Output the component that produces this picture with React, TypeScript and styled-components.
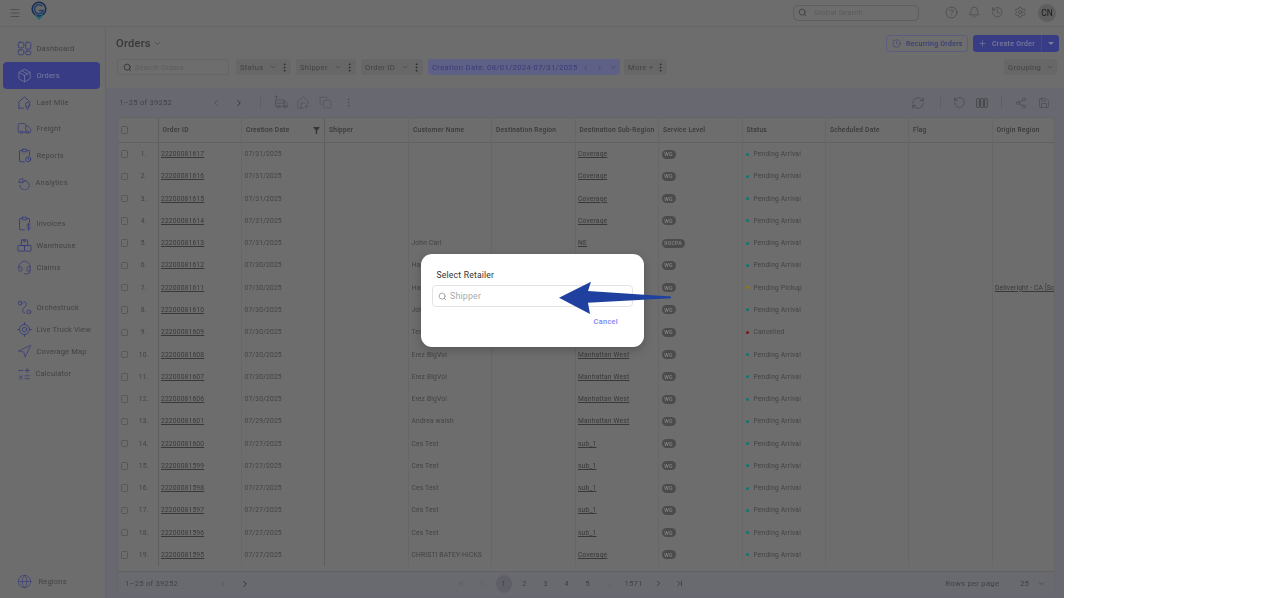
import React from "react";
import styled, { createGlobalStyle } from "styled-components";
import {
  Menu, Package, Truck, Globe, Headset, Navigation, Search, ChevronDown, ChevronLeft, ChevronRight,
  EllipsisVertical, Clock, Plus, CircleHelp, Bell, History, Settings, HousePlus, Copy,
  RefreshCw, RotateCcw, Share2, Save, ChevronFirst, ChevronLast,
} from "lucide-react";

const C = {
  base: "#808080",
  line: "#777777",
  softLine: "#797979",
  lav: "#7a7a85",
  chip: "#797979",
  text: "#434343",
  mid: "#4e4e4e",
  blue: "#42479c",
  icon: "#41468f",
  chipBlue: "#70719c",
};

const Global = createGlobalStyle`
  html, body { margin: 0; padding: 0; background: #fff; }
  body { font-family: Roboto, "Liberation Sans", sans-serif; color: ${C.text}; }
  * { box-sizing: border-box; }
`;

const Shell = styled.div`
  width: 1280px;
  height: 598px;
  background: #fff;
  overflow: hidden;
`;
const Page = styled.div`
  position: relative;
  width: 1064px;
  height: 598px;
  overflow: hidden;
`;
const Dimmed = styled.div`
  height: 100%;
  display: flex;
  flex-direction: column;
  background: ${C.base};
  filter: brightness(0.85) blur(0.35px);
`;
const TopBar = styled.header`
  height: 27px;
  flex: none;
  display: flex;
  align-items: center;
  padding: 0 8px 1px 9px;
  border-bottom: 1px solid ${C.line};
  color: ${C.mid};
`;
const LogoBox = styled.div`
  margin: -5px 0 0 10px;
  display: flex;
`;
const GlobalSearch = styled.div`
  margin-left: auto;
  width: 126px;
  height: 16px;
  border: 1px solid #6e6e6e;
  border-radius: 5px;
  display: flex;
  align-items: center;
  gap: 7px;
  padding-left: 4px;
  font-size: 7.6px;
  letter-spacing: 0.15px;
  color: #6a6a6a;
`;
const TopIcons = styled.div`
  display: flex;
  align-items: center;
  margin-left: 26px;
  gap: 10.4px;
`;
const Avatar = styled.div`
  width: 18px;
  height: 18px;
  border-radius: 50%;
  background: #6f6f6f;
  display: flex;
  align-items: center;
  justify-content: center;
  font-size: 8.4px;
  color: #222;
  margin-left: 1px;
`;
const Body = styled.div`
  flex: 1;
  min-height: 0;
  display: flex;
`;
const Sidebar = styled.nav`
  width: 106px;
  flex: none;
  border-right: 1px solid ${C.line};
  display: flex;
  flex-direction: column;
  padding: 8.2px 5px 6px 3px;
`;
const NavGroup = styled.div<{ $gap?: number }>`
  display: flex;
  flex-direction: column;
  margin-bottom: ${(p) => p.$gap ?? 0}px;
`;
const NavItem = styled.div<{ $h: number; $active?: boolean }>`
  height: ${(p) => p.$h}px;
  display: flex;
  align-items: center;
  padding-left: 14px;
  gap: 4.5px;
  font-size: 7.5px;
  letter-spacing: 0.18px;
  color: ${(p) => (p.$active ? "#8f92b8" : C.mid)};
  background: ${(p) => (p.$active ? C.blue : "transparent")};
  border-radius: 4px;
  svg { color: ${(p) => (p.$active ? "#8f92b8" : C.icon)}; flex: none; }
`;
const RegionItem = styled(NavItem)`
  margin-top: auto;
  gap: 6.5px;
`;
const Main = styled.main`
  flex: 1;
  min-width: 0;
  display: flex;
  flex-direction: column;
`;
const Header = styled.div`
  height: 61px;
  flex: none;
  padding: 8px 5px 0 10px;
  display: flex;
  flex-direction: column;
  gap: 7px;
`;
const HeadRow = styled.div`
  height: 17px;
  display: flex;
  align-items: center;
`;
const Title = styled.div`
  font-size: 11.2px;
  font-weight: 500;
  letter-spacing: 0.2px;
  color: ${C.text};
  display: flex;
  align-items: center;
  gap: 2px;
  margin-top: -1px;
`;
const Recurring = styled.div`
  margin-left: auto;
  width: 82px;
  height: 17px;
  border: 1px solid #6c6e98;
  border-radius: 3px;
  display: flex;
  align-items: center;
  gap: 5px;
  padding-left: 5px;
  color: ${C.icon};
  font-size: 6.9px;
  font-weight: 500;
  letter-spacing: 0.28px;
`;
const CreateBtn = styled.div`
  margin-left: 5px;
  width: 86px;
  height: 17px;
  background: ${C.blue};
  border-radius: 3px;
  display: flex;
  align-items: center;
  color: #8f92b8;
  font-size: 6.9px;
  font-weight: 500;
  letter-spacing: 0.32px;
`;
const CreateMain = styled.div`
  flex: 1;
  height: 100%;
  display: flex;
  align-items: center;
  gap: 5px;
  padding-left: 5px;
  border-right: 1px solid #52569c;
`;
const Caret = styled.div`
  width: 17px;
  display: flex;
  justify-content: center;
  &::before {
    content: "";
    border: 3px solid transparent;
    border-top: 3px solid #8f92b8;
    border-bottom: 0;
  }
`;
const FilterRow = styled.div`
  height: 16px;
  display: flex;
  align-items: center;
  padding: 0 2px 0 1px;
`;
const OrderSearch = styled.div`
  width: 112px;
  height: 16px;
  border: 1px solid ${C.line};
  border-radius: 3px;
  display: flex;
  align-items: center;
  gap: 3px;
  padding-left: 5px;
  font-size: 7.4px;
  letter-spacing: 0.2px;
  color: #6c6c6c;
  margin-right: 7px;
`;
const Chip = styled.div<{ $w: number; $gap: number; $on?: boolean }>`
  width: ${(p) => p.$w}px;
  height: 16px;
  margin-right: ${(p) => p.$gap}px;
  background: ${(p) => (p.$on ? C.chipBlue : C.chip)};
  border-radius: 3px;
  display: flex;
  align-items: center;
  padding: 0 1px 0 4px;
  font-size: 7.6px;
  letter-spacing: ${(p) => (p.$on ? "0.36px" : "0.3px")};
  color: ${(p) => (p.$on ? C.icon : C.mid)};
  white-space: nowrap;
`;
const ChipLabel = styled.span`
  flex: 1;
`;
const GroupChip = styled(Chip)`
  margin: 0 0 0 auto;
`;
const TableArea = styled.div`
  flex: 1;
  min-height: 0;
  background: ${C.lav};
  padding: 0 9px 3px 11px;
  display: flex;
  flex-direction: column;
`;
const Tools = styled.div`
  height: 29px;
  flex: none;
  display: flex;
  align-items: center;
  padding: 0 5px 0 2px;
  color: ${C.mid};
`;
const CountText = styled.span`
  font-size: 7.7px;
  letter-spacing: 0.2px;
  color: ${C.mid};
`;
const PrevNext = styled.div<{ $left: number; $gap: number }>`
  display: flex;
  align-items: center;
  gap: ${(p) => p.$gap}px;
  margin-left: ${(p) => p.$left}px;
`;
const Divider = styled.div<{ $l: number; $r: number }>`
  width: 1px;
  height: 13px;
  background: #70707a;
  margin: 0 ${(p) => p.$r}px 0 ${(p) => p.$l}px;
`;
const ToolGroup = styled.div<{ $gap: number; $faint?: boolean; $auto?: boolean }>`
  display: flex;
  align-items: center;
  gap: ${(p) => p.$gap}px;
  color: ${(p) => (p.$faint ? "#5f5f64" : C.mid)};
  margin-left: ${(p) => (p.$auto ? "auto" : "0")};
`;
const Card = styled.div`
  flex: 1;
  min-height: 0;
  background: ${C.base};
  border: 1px solid ${C.line};
  border-bottom: 0;
  border-radius: 4px 4px 8px 8px;
  display: flex;
  flex-direction: column;
  overflow: hidden;
`;
const cols = "40.5px 83.5px 83px 84px 83px 83.5px 83.5px 83.5px 83.5px 83px 83.5px 1fr";
const HeadGrid = styled.div`
  height: 25px;
  flex: none;
  display: grid;
  grid-template-columns: ${cols};
  border-bottom: 1px solid #727272;
`;
const HeadCell = styled.div<{ $strong?: boolean }>`
  display: flex;
  align-items: center;
  justify-content: space-between;
  padding: 0 4px;
  font-size: 6.6px;
  font-weight: 500;
  letter-spacing: 0.25px;
  color: ${C.text};
  border-right: 1px solid ${(p) => (p.$strong ? "#6e6e6e" : C.softLine)};
  white-space: nowrap;
  overflow: hidden;
  &:last-child { border-right: 0; }
`;
const RowsBox = styled.div`
  flex: 1;
  min-height: 0;
  overflow: hidden;
`;
const RowGrid = styled.div`
  height: 22.28px;
  display: grid;
  grid-template-columns: ${cols};
`;
const Cell = styled.div<{ $strong?: boolean }>`
  display: flex;
  align-items: center;
  padding: 0 2.5px;
  font-size: 6.7px;
  letter-spacing: 0.17px;
  color: ${C.mid};
  border-right: 1px solid ${(p) => (p.$strong ? "#6e6e6e" : C.softLine)};
  white-space: nowrap;
  overflow: hidden;
  min-width: 0;
  &:last-child { border-right: 0; }
`;
const LeadCell = styled(Cell)`
  padding: 0 0 0 2.5px;
`;
const Check = styled.span`
  width: 7.5px;
  height: 7.5px;
  flex: none;
  border: 1px solid #666;
  border-radius: 1.5px;
`;
const RowNum = styled.span`
  flex: 1;
  text-align: center;
  padding-left: 2px;
`;
const LinkText = styled.span`
  text-decoration: underline;
  color: ${C.text};
`;
const Badge = styled.span`
  height: 9px;
  padding: 0 2.8px;
  border-radius: 5px;
  background: #585858;
  color: #9a9a9a;
  font-size: 5.2px;
  font-weight: 500;
  display: inline-flex;
  align-items: center;
`;
const Dot = styled.span<{ $c: string }>`
  width: 3px;
  height: 3px;
  border-radius: 50%;
  background: ${(p) => p.$c};
  margin-right: 5px;
  margin-left: 0.5px;
  flex: none;
`;
const Footer = styled.div`
  height: 24px;
  flex: none;
  border-top: 1px solid #727272;
  background: #7c7c84;
  display: flex;
  align-items: center;
  padding: 0 8px 0 7px;
  color: ${C.mid};
`;
const Pager = styled.div`
  display: flex;
  align-items: center;
  margin-left: 201px;
`;
const PageItem = styled.div<{ $w?: number; $on?: boolean; $faint?: boolean }>`
  width: ${(p) => p.$w ?? 21}px;
  height: 18px;
  flex: none;
  display: flex;
  align-items: center;
  justify-content: center;
  font-size: 7.8px;
  letter-spacing: 0.2px;
  color: ${(p) => (p.$faint ? "#66666c" : C.mid)};
  position: relative;
  z-index: 0;
  &::before {
    content: "";
    display: ${(p) => (p.$on ? "block" : "none")};
    position: absolute;
    width: 16px;
    height: 18px;
    border-radius: 50%;
    background: #70707a;
    z-index: -1;
  }
`;
const RowsLabel = styled.span`
  margin-left: auto;
  font-size: 7.8px;
  letter-spacing: 0.2px;
`;
const RowsValue = styled.span`
  font-size: 7.8px;
  margin: 0 8px 0 21px;
`;
const Backdrop = styled.div`
  position: absolute;
  inset: 0;
  display: flex;
  justify-content: center;
  padding-top: 254px;
`;
const Dialog = styled.div`
  width: 223px;
  height: 93px;
  margin-left: 1px;
  background: #fff;
  border-radius: 11px;
  box-shadow: 0 3px 10px rgba(0, 0, 0, 0.22);
  padding: 16px 11px 0;
  display: flex;
  flex-direction: column;
  color: #333;
`;
const DialogTitle = styled.div`
  font-size: 8.6px;
  letter-spacing: 0.2px;
  padding-left: 4.5px;
  line-height: 11px;
  height: 15px;
`;
const Field = styled.div`
  height: 22px;
  border: 1px solid #e3e3e3;
  border-radius: 4px;
  display: flex;
  align-items: center;
  gap: 3px;
  padding-left: 5px;
  font-size: 8.8px;
  letter-spacing: 0.2px;
  color: #aaa;
  svg { color: #777; }
`;
const Cancel = styled.div`
  align-self: flex-end;
  margin: 9.5px 15px 0 0;
  font-size: 7.4px;
  font-weight: 500;
  letter-spacing: 0.3px;
  color: #7d80f0;
`;
const ArrowSvg = styled.svg`
  position: absolute;
  left: 555px;
  top: 278px;
`;

const Ic = ({ children, s = 14 }: { children: React.ReactNode; s?: number }) => (
  <svg width={s} height={s} viewBox="0 0 24 24" fill="none" stroke="currentColor" strokeWidth={1.4} strokeLinecap="round" strokeLinejoin="round">
    {children}
  </svg>
);
const DashIcon = () => (
  <Ic s={15}>
    <rect x="2" y="2" width="9" height="9" rx="2.5" /><rect x="14" y="2" width="8" height="11" rx="2" />
    <rect x="2" y="14" width="9" height="8" rx="2" /><rect x="14" y="16" width="8" height="6" rx="2" />
  </Ic>
);
const LastMileIcon = () => (
  <Ic s={15}>
    <path d="M3 21V11l9-8 9 8" /><path d="M3 21h8" /><circle cx="17" cy="15" r="3.4" /><path d="M17 23l-3-5M17 23l3-5" />
  </Ic>
);
const ReportIcon = () => (
  <Ic s={15}>
    <path d="M8 4H5a1 1 0 0 0-1 1v16a1 1 0 0 0 1 1h7" /><path d="M16 4h3a1 1 0 0 1 1 1v7" /><rect x="8" y="2" width="8" height="4" rx="1" />
    <circle cx="18" cy="18" r="4" /><path d="M18 16v2l1.4 1" />
  </Ic>
);
const AnalyticsIcon = () => (
  <Ic s={14}>
    <path d="M9 4a7 7 0 0 0-6 7h7V5z" /><path d="M13 8a8 8 0 1 1-8 8" /><path d="M10 11l4-3" />
  </Ic>
);
const InvoiceIcon = () => (
  <Ic s={15}>
    <path d="M8 4H5a1 1 0 0 0-1 1v16a1 1 0 0 0 1 1h7" /><path d="M16 4h3a1 1 0 0 1 1 1v6" /><rect x="8" y="2" width="8" height="4" rx="1" />
    <path d="M21 14.5c-.5-1-1.4-1.5-2.5-1.5-1.5 0-2.5.8-2.5 2s1 1.7 2.5 2 2.5.8 2.5 2-1 2-2.5 2c-1.1 0-2-.5-2.5-1.5M18.5 12v11" />
  </Ic>
);
const WarehouseIcon = () => (
  <Ic s={15}>
    <rect x="7" y="3" width="10" height="9" rx="1" /><rect x="1.5" y="12" width="10.5" height="9" rx="1" /><rect x="12" y="12" width="10.5" height="9" rx="1" /><path d="M11 3v3h2V3" />
  </Ic>
);
const OrchIcon = () => (
  <Ic s={15}>
    <circle cx="5" cy="5" r="3" /><circle cx="19" cy="19" r="3" /><path d="M11 3c4 0 5 3 3 6l-4 5c-2 3-1 6 3 7" />
  </Ic>
);
const LiveIcon = () => (
  <Ic s={15}>
    <circle cx="12" cy="12" r="8" /><circle cx="12" cy="12" r="3.5" /><path d="M12 1v3M12 20v3M1 12h3M20 12h3" />
  </Ic>
);
const CalcIcon = () => (
  <Ic s={14}>
    <path d="M3 6h7M14 6h7M17.5 2.5v7M3.5 15l6 6M9.5 15l-6 6M14 15h7M14 20h7" />
  </Ic>
);
const ColumnsIcon = () => (
  <svg width="12" height="12" viewBox="0 0 24 24" fill="none" stroke="currentColor" strokeWidth="1.8">
    <rect x="1.5" y="3" width="5.6" height="18" rx="1.6" /><rect x="9.2" y="3" width="5.6" height="18" rx="1.6" /><rect x="16.9" y="3" width="5.6" height="18" rx="1.6" />
  </svg>
);
const FunnelIcon = () => (
  <svg width="7" height="7" viewBox="0 0 10 10"><path d="M0 0h10L6 5v5H4V5z" fill="#3e3e3e" /></svg>
);
const TruckPlusIcon = () => (
  <Ic s={15}>
    <path d="M2 3h4M4 1v4" /><path d="M3 8h13v10H3z" /><path d="M16 11h3l3 3v4h-6" /><circle cx="7" cy="19" r="2" /><circle cx="18" cy="19" r="2" /><path d="M3 13h13" />
  </Ic>
);
const Logo = () => (
  <svg width="16" height="19" viewBox="0 0 34 40" fill="none">
    <path d="M17 38 L8 28 A14.5 14.5 0 1 1 26 28 Z" fill="#686e78" />
    <circle cx="17" cy="17" r="14.5" stroke="#1f3464" strokeWidth="3.2" fill="#7a7a7a" />
    <path d="M24 11 A9.5 9.5 0 1 0 26 20 H17" stroke="#234a80" strokeWidth="3.4" />
    <path d="M9 29 L17 38 L25 29" stroke="#1d7d86" strokeWidth="2.6" />
  </svg>
);

const PA: [string, string] = ["Pending Arrival", "#118a8a"];
const rows: { id: string; date: string; cust: string; sub: string; lvl: string; st: [string, string]; origin?: string }[] = [
  { id: "22200081617", date: "07/31/2025", cust: "", sub: "Coverage", lvl: "WG", st: PA },
  { id: "22200081616", date: "07/31/2025", cust: "", sub: "Coverage", lvl: "WG", st: PA },
  { id: "22200081615", date: "07/31/2025", cust: "", sub: "Coverage", lvl: "WG", st: PA },
  { id: "22200081614", date: "07/31/2025", cust: "", sub: "Coverage", lvl: "WG", st: PA },
  { id: "22200081613", date: "07/31/2025", cust: "John Carl", sub: "NE", lvl: "ROCPA", st: PA },
  { id: "22200081612", date: "07/30/2025", cust: "Hannah Lee", sub: "", lvl: "WG", st: PA },
  { id: "22200081611", date: "07/30/2025", cust: "Hannah Lee", sub: "", lvl: "WG", st: ["Pending Pickup", "#b08a10"], origin: "Deliveright - CA [South]" },
  { id: "22200081610", date: "07/30/2025", cust: "John Carl", sub: "", lvl: "WG", st: PA },
  { id: "22200081609", date: "07/30/2025", cust: "Test", sub: "", lvl: "WG", st: ["Cancelled", "#8c1f1f"] },
  { id: "22200081608", date: "07/30/2025", cust: "Erez BigVol", sub: "Manhattan West", lvl: "WG", st: PA },
  { id: "22200081607", date: "07/30/2025", cust: "Erez BigVol", sub: "Manhattan West", lvl: "WG", st: PA },
  { id: "22200081606", date: "07/30/2025", cust: "Erez BigVol", sub: "Manhattan West", lvl: "WG", st: PA },
  { id: "22200081601", date: "07/29/2025", cust: "Andrea walsh", sub: "Manhattan West", lvl: "WG", st: PA },
  { id: "22200081600", date: "07/27/2025", cust: "Ces Test", sub: "sub_1", lvl: "WG", st: PA },
  { id: "22200081599", date: "07/27/2025", cust: "Ces Test", sub: "sub_1", lvl: "WG", st: PA },
  { id: "22200081598", date: "07/27/2025", cust: "Ces Test", sub: "sub_1", lvl: "WG", st: PA },
  { id: "22200081597", date: "07/27/2025", cust: "Ces Test", sub: "sub_1", lvl: "WG", st: PA },
  { id: "22200081596", date: "07/27/2025", cust: "Ces Test", sub: "sub_1", lvl: "WG", st: PA },
  { id: "22200081595", date: "07/27/2025", cust: "CHRISTI BATEY-HICKS", sub: "Coverage", lvl: "WG", st: PA },
];

const heads = ["Shipper", "Customer Name", "Destination Region", "Destination Sub-Region", "Service Level", "Status", "Scheduled Date", "Flag", "Origin Region"];
const filters: { label: string; w: number; gap: number }[] = [
  { label: "Status", w: 55, gap: 5 },
  { label: "Shipper", w: 60, gap: 5 },
  { label: "Order ID", w: 62, gap: 5 },
];

export default function App() {
  return (
    <Shell>
      <Global />
      <Page>
        <Dimmed>
        <TopBar>
          <Menu size={12} strokeWidth={1.4} />
          <LogoBox><Logo /></LogoBox>
          <GlobalSearch><Search size={9} color="#444" />Global Search</GlobalSearch>
          <TopIcons>
            <CircleHelp size={13} strokeWidth={1.2} />
            <Bell size={12.5} strokeWidth={1.2} />
            <History size={12.5} strokeWidth={1.2} />
            <Settings size={12.5} strokeWidth={1.2} />
            <Avatar>CN</Avatar>
          </TopIcons>
        </TopBar>
        <Body>
          <Sidebar>
            <NavGroup $gap={16.5}>
              <NavItem $h={26.8}><DashIcon />Dashboard</NavItem>
              <NavItem $h={26.8} $active><Package size={15} strokeWidth={1.2} />Orders</NavItem>
              <NavItem $h={26.8}><LastMileIcon />Last Mile</NavItem>
              <NavItem $h={26.8}><Truck size={15} strokeWidth={1.2} />Freight</NavItem>
              <NavItem $h={26.8}><ReportIcon />Reports</NavItem>
              <NavItem $h={26.8}><AnalyticsIcon />Analytics</NavItem>
            </NavGroup>
            <NavGroup $gap={17.3}>
              <NavItem $h={22.2}><InvoiceIcon />Invoices</NavItem>
              <NavItem $h={22.2}><WarehouseIcon />Warehouse</NavItem>
              <NavItem $h={22.2}><Headset size={15} strokeWidth={1.2} />Claims</NavItem>
            </NavGroup>
            <NavGroup>
              <NavItem $h={22.2}><OrchIcon />Orchestruck</NavItem>
              <NavItem $h={22.2}><LiveIcon />Live Truck View</NavItem>
              <NavItem $h={22.2}><Navigation size={15} strokeWidth={1.2} />Coverage Map</NavItem>
              <NavItem $h={22.2}><CalcIcon />Calculator</NavItem>
            </NavGroup>
            <RegionItem $h={22}><Globe size={15} strokeWidth={1.1} />Regions</RegionItem>
          </Sidebar>
          <Main>
            <Header>
              <HeadRow>
                <Title>Orders<ChevronDown size={9} strokeWidth={1.6} /></Title>
                <Recurring><Clock size={9} strokeWidth={1.4} />Recurring Orders</Recurring>
                <CreateBtn>
                  <CreateMain><Plus size={9} strokeWidth={1.8} />Create Order</CreateMain>
                  <Caret />
                </CreateBtn>
              </HeadRow>
              <FilterRow>
                <OrderSearch><Search size={9} color="#333" />Search Orders</OrderSearch>
                {filters.map((f) => (
                  <Chip key={f.label} $w={f.w} $gap={f.gap}>
                    <ChipLabel>{f.label}</ChipLabel>
                    <ChevronDown size={8} strokeWidth={1.8} />
                    <EllipsisVertical size={11} strokeWidth={2} color="#333" style={{ marginLeft: 2 }} />
                  </Chip>
                ))}
                <Chip $w={192} $gap={4} $on>
                  <ChipLabel>Creation Date: 08/01/2024-07/31/2025</ChipLabel>
                  <ChevronLeft size={7} strokeWidth={2.2} style={{ marginRight: 7 }} />
                  <ChevronRight size={7} strokeWidth={2.2} style={{ marginRight: 7 }} />
                  <ChevronDown size={7} strokeWidth={2.2} style={{ marginRight: 2 }} />
                </Chip>
                <Chip $w={43} $gap={0}>
                  <ChipLabel>More +</ChipLabel>
                  <EllipsisVertical size={11} strokeWidth={2} color="#333" />
                </Chip>
                <GroupChip $w={53} $gap={0}>
                  <ChipLabel>Grouping</ChipLabel>
                  <ChevronDown size={8} strokeWidth={1.8} style={{ marginRight: 2 }} />
                </GroupChip>
              </FilterRow>
            </Header>
            <TableArea>
              <Tools>
                <CountText>1–25 of 39252</CountText>
                <PrevNext $left={39} $gap={13}>
                  <ChevronLeft size={10} strokeWidth={1.5} />
                  <ChevronRight size={10} strokeWidth={2} color="#333" />
                </PrevNext>
                <Divider $l={16} $r={13} />
                <ToolGroup $gap={7} $faint>
                  <TruckPlusIcon />
                  <HousePlus size={14} strokeWidth={1.2} />
                  <Copy size={13} strokeWidth={1.2} style={{ marginLeft: 2 }} />
                  <EllipsisVertical size={11} strokeWidth={2} style={{ marginLeft: 4 }} />
                </ToolGroup>
                <ToolGroup $gap={0} $auto>
                  <RefreshCw size={14} strokeWidth={1.1} />
                </ToolGroup>
                <Divider $l={15} $r={12} />
                <ToolGroup $gap={10}>
                  <RotateCcw size={13} strokeWidth={1.1} />
                  <ColumnsIcon />
                </ToolGroup>
                <Divider $l={13} $r={13} />
                <ToolGroup $gap={11}>
                  <Share2 size={12} strokeWidth={1.1} />
                  <Save size={12} strokeWidth={1.1} />
                </ToolGroup>
              </Tools>
              <Card>
                <HeadGrid>
                  <LeadCell $strong><Check /></LeadCell>
                  <HeadCell>Order ID</HeadCell>
                  <HeadCell $strong>Creation Date<FunnelIcon /></HeadCell>
                  {heads.map((h) => <HeadCell key={h}>{h}</HeadCell>)}
                </HeadGrid>
                <RowsBox>
                  {rows.map((r, i) => (
                    <RowGrid key={r.id}>
                      <LeadCell $strong><Check /><RowNum>{i + 1}.</RowNum></LeadCell>
                      <Cell><LinkText>{r.id}</LinkText></Cell>
                      <Cell $strong>{r.date}</Cell>
                      <Cell />
                      <Cell>{r.cust}</Cell>
                      <Cell />
                      <Cell><LinkText>{r.sub}</LinkText></Cell>
                      <Cell><Badge>{r.lvl}</Badge></Cell>
                      <Cell><Dot $c={r.st[1]} />{r.st[0]}</Cell>
                      <Cell />
                      <Cell />
                      <Cell>{r.origin ? <LinkText>{r.origin}</LinkText> : null}</Cell>
                    </RowGrid>
                  ))}
                </RowsBox>
                <Footer>
                  <CountText>1–25 of 39252</CountText>
                  <PrevNext $left={40} $gap={12}>
                    <ChevronLeft size={10} strokeWidth={1.5} color="#5f5f64" />
                    <ChevronRight size={10} strokeWidth={2} color="#333" />
                  </PrevNext>
                  <Pager>
                    <PageItem $faint><ChevronFirst size={9} strokeWidth={1.4} /></PageItem>
                    <PageItem $faint><ChevronLeft size={9} strokeWidth={1.4} /></PageItem>
                    <PageItem $on>1</PageItem>
                    <PageItem>2</PageItem>
                    <PageItem>3</PageItem>
                    <PageItem>4</PageItem>
                    <PageItem>5</PageItem>
                    <PageItem $faint>...</PageItem>
                    <PageItem $w={29}>1571</PageItem>
                    <PageItem><ChevronRight size={9} strokeWidth={1.8} color="#333" /></PageItem>
                    <PageItem><ChevronLast size={9} strokeWidth={1.6} color="#333" /></PageItem>
                  </Pager>
                  <RowsLabel>Rows per page</RowsLabel>
                  <RowsValue>25</RowsValue>
                  <ChevronDown size={9} strokeWidth={1.8} />
                </Footer>
              </Card>
            </TableArea>
          </Main>
        </Body>
        </Dimmed>
        <Backdrop>
          <Dialog>
            <DialogTitle>Select Retailer</DialogTitle>
            <Field><Search size={9} strokeWidth={1.6} />Shipper</Field>
            <Cancel>Cancel</Cancel>
          </Dialog>
        </Backdrop>
        <ArrowSvg width="120" height="40" viewBox="555 278 120 40">
          <path d="M559 297.7 L591 281.7 L588 291 L671 296.6 L671 298.3 L588 302.7 L590 314 Z" fill="#1f409f" />
        </ArrowSvg>
      </Page>
    </Shell>
  );
}
